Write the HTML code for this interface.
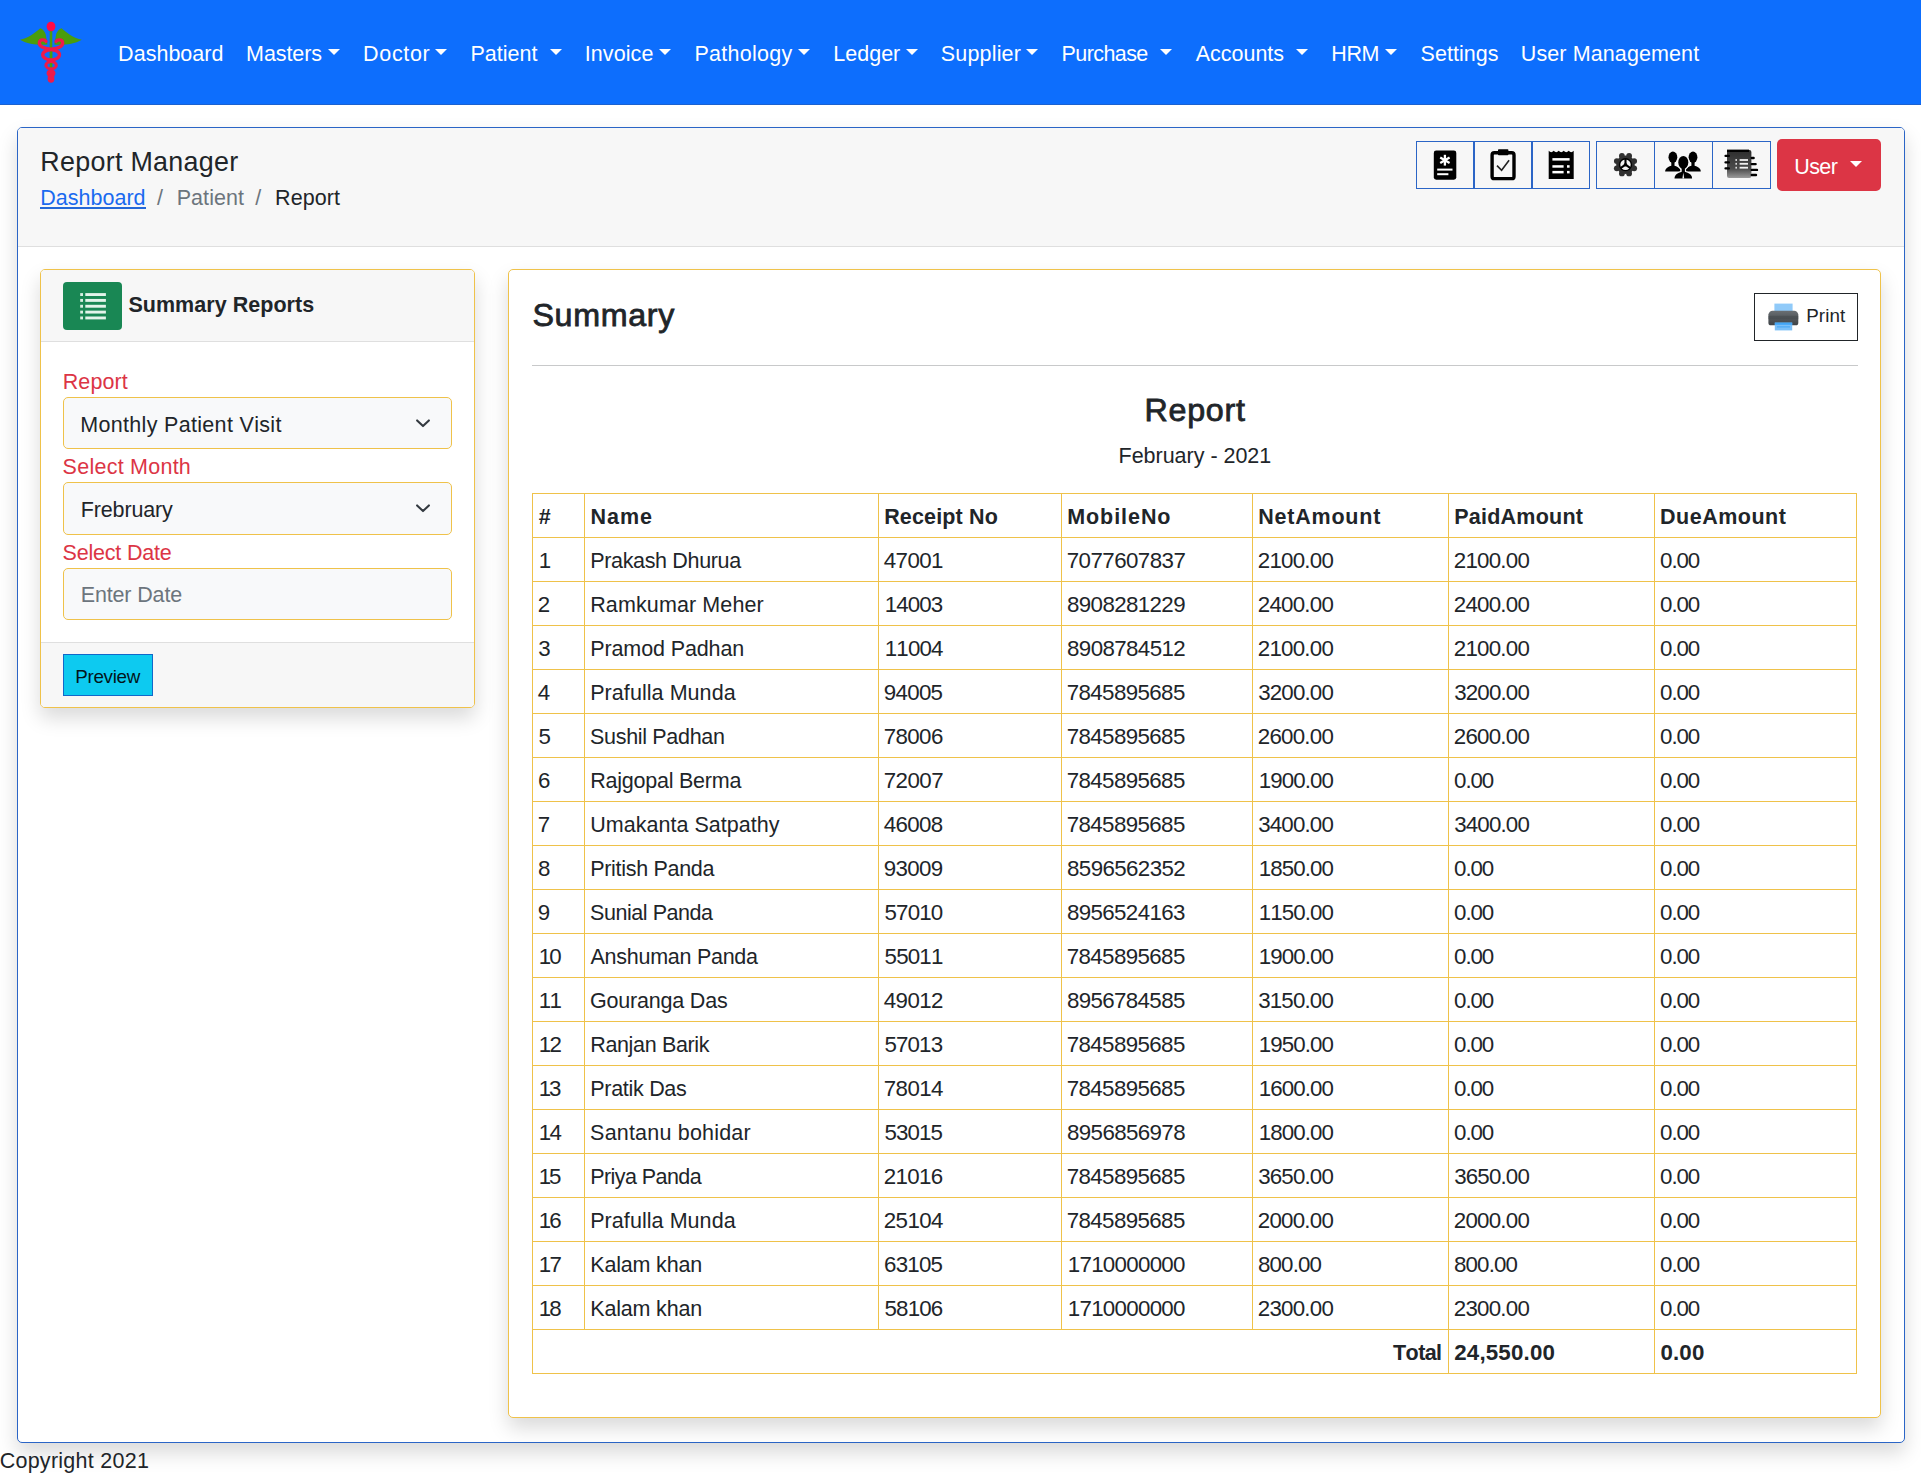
<!DOCTYPE html>
<html lang="en"><head><meta charset="utf-8"><title>Report Manager</title>
<style>
html,body{margin:0;padding:0}
body{width:1921px;height:1475px;position:relative;overflow:hidden;background:#fff;color:#212529;
font-family:"Liberation Sans",sans-serif;font-size:21.5px;font-kerning:none}
*{box-sizing:border-box}
.abs,.t{position:absolute}
.t{white-space:nowrap;line-height:1;display:block}
a{text-decoration:none;color:inherit}
nav{position:absolute;left:0;top:0;width:1921px;height:104px;background:#0d6efd;color:#fff}
.caret{position:absolute;width:0;height:0;border-left:6.2px solid transparent;border-right:6.2px solid transparent;border-top:6.5px solid #fff}
.card{position:absolute;background:#fff;border-radius:5px;box-shadow:0 10px 20px rgba(0,0,0,.15)}
.hdr{position:absolute;background:#f7f7f7}
.ib{position:absolute;top:141px;height:48px;border:1px solid #2b65c6;background:#f7f7f7}
.fc{position:absolute;left:63px;width:389px;height:52px;background:#f8f9fa;border:1px solid #efc24a;border-radius:5px}
table{position:absolute;left:532px;top:493px;border-collapse:separate;border-spacing:0;table-layout:fixed;width:1325px;
border-top:1px solid #efc24a;border-left:1px solid #efc24a}
td,th{height:44px;padding:1px 0 0 0;line-height:42px;border-right:1px solid #efc24a;border-bottom:1px solid #efc24a;
text-align:left;font-weight:400;white-space:nowrap;overflow:hidden;font-size:21.5px}
th,tfoot td{font-weight:700}
td span,th span{position:relative;top:1px;display:inline-block}
</style></head><body>

<nav>
<svg style="position:absolute;left:0px;top:0px" width="104" height="104" viewBox="0 0 104 104"><path fill="#4a9d0c" d="M20 39.8 C28 38 35 33 40.3 28.2 C42.5 28.6 44.5 31 45.6 34 L47.5 44.6 C40 45.4 28 44.6 20 39.8Z"/><path fill="#4a9d0c" d="M81.8 39.8 C73.8 38 66.8 33 61.5 28.2 C59.3 28.6 57.3 31 56.2 34 L54.3 44.6 C61.8 45.4 73.8 44.6 81.8 39.8Z"/><rect x="49.7" y="29" width="2.6" height="42" fill="#4a9d0c"/><ellipse cx="51" cy="26.5" rx="4.4" ry="4.8" fill="#ff0a47"/><g fill="none" stroke="#ee1a4b" stroke-width="3.3" stroke-linecap="round"><path d="M50.5 49.2 C44 48.4 38.6 46.6 39.4 42.2 C40 39.4 44.6 39.2 46 41.4"/><path d="M51.5 49.2 C58 48.4 63.4 46.6 62.6 42.2 C62 39.4 57.4 39.2 56 41.4"/><ellipse cx="51.1" cy="54.8" rx="8.4" ry="5"/><ellipse cx="51.1" cy="65.2" rx="5.2" ry="3.6" stroke-width="3.1"/></g><rect x="49.9" y="51.6" width="2.3" height="6.4" fill="#4a9d0c"/><rect x="50" y="63" width="2.1" height="4.2" fill="#4a9d0c"/><ellipse cx="51" cy="73.2" rx="4.4" ry="3.6" fill="#ee1a4b"/><ellipse cx="51" cy="78.4" rx="3.4" ry="4.4" fill="#ee1a4b"/></svg>
<a class="t" style="left:118.12px;top:44.00px;font-size:21.49px;letter-spacing:0.029px;">Dashboard</a>
<a class="t" style="left:246.09px;top:44.00px;font-size:21.49px;letter-spacing:-0.090px;">Masters</a>
<i class="caret" style="left:327.7px;top:49px"></i>
<a class="t" style="left:363.11px;top:44.00px;font-size:21.49px;letter-spacing:0.659px;">Doctor</a>
<i class="caret" style="left:435.0px;top:49px"></i>
<a class="t" style="left:470.39px;top:44.00px;font-size:21.49px;letter-spacing:0.045px;">Patient</a>
<i class="caret" style="left:549.5px;top:49px"></i>
<a class="t" style="left:584.69px;top:44.00px;font-size:21.49px;letter-spacing:0.095px;">Invoice</a>
<i class="caret" style="left:659.0px;top:49px"></i>
<a class="t" style="left:694.43px;top:44.00px;font-size:21.49px;letter-spacing:0.285px;">Pathology</a>
<i class="caret" style="left:797.9px;top:49px"></i>
<a class="t" style="left:833.29px;top:44.00px;font-size:21.49px;letter-spacing:0.014px;">Ledger</a>
<i class="caret" style="left:905.5px;top:49px"></i>
<a class="t" style="left:940.87px;top:44.00px;font-size:21.49px;letter-spacing:0.165px;">Supplier</a>
<i class="caret" style="left:1026.1px;top:49px"></i>
<a class="t" style="left:1061.55px;top:44.00px;font-size:21.49px;letter-spacing:-0.578px;">Purchase</a>
<i class="caret" style="left:1160.0px;top:49px"></i>
<a class="t" style="left:1195.69px;top:44.00px;font-size:21.49px;letter-spacing:0.004px;">Accounts</a>
<i class="caret" style="left:1295.9px;top:49px"></i>
<a class="t" style="left:1331.29px;top:44.00px;font-size:21.49px;letter-spacing:-0.419px;">HRM</a>
<i class="caret" style="left:1385.2px;top:49px"></i>
<a class="t" style="left:1420.55px;top:44.00px;font-size:21.49px;letter-spacing:0.034px;">Settings</a>
<a class="t" style="left:1520.77px;top:44.00px;font-size:21.49px;letter-spacing:0.117px;">User Management</a>
</nav>
<div class="abs" style="left:0;top:104px;width:1921px;height:1px;background:#1c62cf"></div>
<div class="card" style="left:17px;top:127px;width:1888px;height:1316px;border:1px solid #2b65c6">
<div class="hdr" style="left:0;top:0;width:1886px;height:119px;border-bottom:1px solid #dfdfdf;border-radius:4px 4px 0 0"></div>
</div>
<h5 class="t" style="left:40.27px;top:149.00px;font-size:26.87px;letter-spacing:0.297px;margin:0;font-weight:400;">Report Manager</h5>
<a class="t" style="left:40.22px;top:188.00px;font-size:21.49px;letter-spacing:0.029px;color:#1a6af0;">Dashboard</a>
<div class="abs" style="left:40px;top:207px;width:106px;height:2px;background:#2468d8"></div>
<span class="t" style="left:156.97px;top:188.00px;font-size:21.49px;letter-spacing:0.000px;color:#6c757d;">/</span>
<span class="t" style="left:176.75px;top:188.00px;font-size:21.49px;letter-spacing:0.045px;color:#6c757d;">Patient</span>
<span class="t" style="left:255.22px;top:188.00px;font-size:21.49px;letter-spacing:0.000px;color:#6c757d;">/</span>
<span class="t" style="left:275.00px;top:188.00px;font-size:21.49px;letter-spacing:0.116px;">Report</span>
<div class="ib" style="left:1416px;width:58px"><svg style="position:absolute;left:-1px;top:-1px" width="58" height="48" viewBox="0 0 58 48"><rect x="17.8" y="9.6" width="22.5" height="29.1" rx="2.4" fill="#000"/><line x1="28.90" y1="13.80" x2="28.90" y2="24.60" stroke="#fff" stroke-width="2.3"/><line x1="24.22" y1="16.50" x2="33.58" y2="21.90" stroke="#fff" stroke-width="2.3"/><line x1="24.22" y1="21.90" x2="33.58" y2="16.50" stroke="#fff" stroke-width="2.3"/><rect x="21.2" y="27.6" width="15.3" height="2" fill="#fff"/><rect x="21.2" y="32.2" width="11.2" height="2" fill="#fff"/></svg></div>
<div class="ib" style="left:1474px;width:58px"><svg style="position:absolute;left:-1px;top:-1px" width="58" height="48" viewBox="0 0 58 48"><rect x="18.1" y="11.8" width="21.9" height="25.8" rx="2.2" fill="none" stroke="#000" stroke-width="3.4"/><rect x="24" y="8.2" width="10.4" height="6" rx="0.8" fill="#000"/><path d="M23 24.6 L27.6 29.3 L35.1 19.3" fill="none" stroke="#222" stroke-width="1.6"/></svg></div>
<div class="ib" style="left:1532px;width:58px"><svg style="position:absolute;left:-1px;top:-1px" width="58" height="48" viewBox="0 0 58 48"><path d="M16.70 37.90 L16.70 9.70 Q19.20 12.60 21.70 9.70 Q24.20 12.60 26.70 9.70 Q29.20 12.60 31.70 9.70 Q34.20 12.60 36.70 9.70 Q39.20 12.60 41.70 9.70 L41.70 37.90 Z" fill="#000"/><rect x="20.4" y="17.1" width="17.2" height="2.5" fill="#fff"/><rect x="20.4" y="24.2" width="11.2" height="2.5" fill="#fff"/><rect x="35" y="24.2" width="2.6" height="2.5" fill="#fff"/><rect x="20.4" y="29.9" width="11.2" height="2.5" fill="#fff"/><rect x="35" y="29.9" width="2.6" height="2.5" fill="#fff"/></svg></div>
<div class="ib" style="left:1596px;width:59px"><svg style="position:absolute;left:-1px;top:-1px" width="59" height="48" viewBox="0 0 59 48"><circle cx="29.5" cy="23.7" r="9.3" fill="#303030"/><circle cx="38.18" cy="27.30" r="2.9" fill="#303030"/><circle cx="33.10" cy="32.38" r="2.9" fill="#303030"/><circle cx="25.90" cy="32.38" r="2.9" fill="#303030"/><circle cx="20.82" cy="27.30" r="2.9" fill="#303030"/><circle cx="20.82" cy="20.10" r="2.9" fill="#303030"/><circle cx="25.90" cy="15.02" r="2.9" fill="#303030"/><circle cx="33.10" cy="15.02" r="2.9" fill="#303030"/><circle cx="38.18" cy="20.10" r="2.9" fill="#303030"/><circle cx="29.5" cy="23.7" r="6.6" fill="#000"/><circle cx="29.5" cy="23.7" r="5.2" fill="#f4f4f4"/><circle cx="29.5" cy="23.7" r="1.7" fill="#000"/><line x1="29.5" y1="23.7" x2="29.50" y2="17.70" stroke="#000" stroke-width="2.1"/><line x1="29.5" y1="23.7" x2="24.59" y2="27.14" stroke="#000" stroke-width="2.1"/><line x1="29.5" y1="23.7" x2="34.41" y2="27.14" stroke="#000" stroke-width="2.1"/></svg></div>
<div class="ib" style="left:1654px;width:59px"><svg style="position:absolute;left:-1px;top:-1px" width="59" height="48" viewBox="0 0 59 48"><g fill="#000"><ellipse cx="18.9" cy="16.2" rx="4.4" ry="5.6"/><rect x="17.3" y="20.8" width="3.2" height="5.9"/><path d="M11.15 30.6 C11.15 26.55 15.8 25.2 18.9 24.6 L18.9 24.6 C22 25.2 26.65 26.55 26.65 30.6 Z"/><ellipse cx="39" cy="16.2" rx="4.4" ry="5.6"/><rect x="37.4" y="20.8" width="3.2" height="5.9"/><path d="M31.25 30.6 C31.25 26.55 35.9 25.2 39 24.6 L39 24.6 C42.1 25.2 46.75 26.55 46.75 30.6 Z"/></g><g fill="#f7f7f7" stroke="#f7f7f7" stroke-width="2.4"><ellipse cx="29.3" cy="21.4" rx="5" ry="6.4"/><rect x="27.7" y="26.8" width="3.2" height="5.9"/><path d="M20.5 37.6 C20.5 32.8 25.78 31.2 29.3 30.6 L29.3 30.6 C32.82 31.2 38.1 32.8 38.1 37.6 Z"/></g><g fill="#000"><ellipse cx="29.3" cy="21.4" rx="5" ry="6.4"/><rect x="27.7" y="26.8" width="3.2" height="5.9"/><path d="M20.5 37.6 C20.5 32.8 25.78 31.2 29.3 30.6 L29.3 30.6 C32.82 31.2 38.1 32.8 38.1 37.6 Z"/></g><path d="M29.3 31.5 L28.4 37.4 L30.2 37.4Z" fill="#f7f7f7"/></svg></div>
<div class="ib" style="left:1712px;width:59px"><svg style="position:absolute;left:-1px;top:-1px" width="59" height="48" viewBox="0 0 59 48"><defs><linearGradient id="nb" x1="0" y1="0" x2="0" y2="1"><stop offset="0" stop-color="#2c2c2c"/><stop offset="0.68" stop-color="#4c4c4c"/><stop offset="1" stop-color="#9a9a9a"/></linearGradient></defs><rect x="15" y="9" width="24.4" height="27.9" rx="2" fill="url(#nb)"/><rect x="15" y="8.6" width="22" height="2.4" fill="#000"/><rect x="12.4" y="13.8" width="5.6" height="2.3" rx="1.1" fill="#000"/><rect x="12.4" y="20.2" width="5.6" height="2.3" rx="1.1" fill="#000"/><rect x="12.4" y="26.2" width="5.6" height="2.3" rx="1.1" fill="#000"/><rect x="38.6" y="15.8" width="4.2" height="2.4" rx="1.2" fill="#000"/><rect x="38.6" y="21.9" width="6.2" height="2.4" rx="1.2" fill="#000"/><rect x="38.6" y="27.7" width="7.6" height="2.4" rx="1.2" fill="#000"/><rect x="38.6" y="32.8" width="6.6" height="2.4" rx="1.2" fill="#000"/><rect x="23.4" y="18.1" width="1.6" height="1.8" fill="#dcdcdc"/><rect x="27.6" y="18.1" width="8.4" height="1.8" fill="#f0f0f0"/><rect x="23.4" y="21.9" width="1.6" height="1.8" fill="#dcdcdc"/><rect x="27.6" y="21.9" width="8.4" height="1.8" fill="#f0f0f0"/><rect x="23.4" y="25.8" width="1.6" height="1.8" fill="#dcdcdc"/><rect x="27.6" y="25.8" width="8.4" height="1.8" fill="#f0f0f0"/></svg></div>
<div class="abs" style="left:1777px;top:139px;width:104px;height:52px;background:#dc3545;border-radius:5px"></div>
<span class="t" style="left:1794.21px;top:157.00px;font-size:21.49px;letter-spacing:-0.552px;color:#fff;">User</span>
<i class="caret" style="left:1850.2px;top:161px"></i>
<div class="card" style="left:40px;top:269px;width:435px;height:439px;border:1px solid #efc24a">
<div class="hdr" style="left:0;top:0;width:433px;height:72px;border-bottom:1px solid #dfdfdf;border-radius:4px 4px 0 0"></div>
<div class="hdr" style="left:0;top:372px;width:433px;height:65px;border-top:1px solid #dfdfdf;border-radius:0 0 4px 4px"></div>
</div>
<div class="abs" style="left:63px;top:282px;width:59px;height:48px;background:#198754;border-radius:4px"><svg style="position:absolute;left:0px;top:0px" width="59" height="48" viewBox="0 0 59 48"><rect x="17.2" y="11.10" width="2.8" height="2.9" fill="#d9f0e3"/><rect x="22.3" y="11.10" width="20.6" height="2.9" fill="#e3f4ea"/><rect x="17.2" y="16.95" width="2.8" height="2.9" fill="#d9f0e3"/><rect x="22.3" y="16.95" width="20.6" height="2.9" fill="#e3f4ea"/><rect x="17.2" y="22.80" width="2.8" height="2.9" fill="#d9f0e3"/><rect x="22.3" y="22.80" width="20.6" height="2.9" fill="#e3f4ea"/><rect x="17.2" y="28.65" width="2.8" height="2.9" fill="#d9f0e3"/><rect x="22.3" y="28.65" width="20.6" height="2.9" fill="#e3f4ea"/><rect x="17.2" y="34.50" width="2.8" height="2.9" fill="#d9f0e3"/><rect x="22.3" y="34.50" width="20.6" height="2.9" fill="#e3f4ea"/></svg></div>
<span class="t" style="left:128.38px;top:295.00px;font-size:21.49px;letter-spacing:0.054px;font-weight:700;">Summary Reports</span>
<label class="t" style="left:62.72px;top:372.00px;font-size:21.49px;letter-spacing:0.116px;color:#dc3545;">Report</label>
<div class="fc" style="top:397px"></div>
<span class="t" style="left:80.22px;top:415.00px;font-size:21.49px;letter-spacing:0.326px;">Monthly Patient Visit</span>
<label class="t" style="left:62.62px;top:457.00px;font-size:21.49px;letter-spacing:0.255px;color:#dc3545;">Select Month</label>
<div class="fc" style="top:482px;height:53px"></div>
<span class="t" style="left:80.72px;top:500.00px;font-size:21.49px;letter-spacing:-0.128px;">Frebruary</span>
<label class="t" style="left:62.62px;top:543.00px;font-size:21.49px;letter-spacing:-0.202px;color:#dc3545;">Select Date</label>
<div class="fc" style="top:568px"></div>
<span class="t" style="left:80.72px;top:585.00px;font-size:21.49px;letter-spacing:-0.138px;color:#6c757d;">Enter Date</span>
<svg class="abs" style="left:414px;top:418px" width="18" height="12" viewBox="0 0 18 12"><path d="M3.1 2.4 L9 8.1 L14.9 2.4" fill="none" stroke="#343a40" stroke-width="2.1" stroke-linecap="round" stroke-linejoin="round"/></svg>
<svg class="abs" style="left:414px;top:503px" width="18" height="12" viewBox="0 0 18 12"><path d="M3.1 2.4 L9 8.1 L14.9 2.4" fill="none" stroke="#343a40" stroke-width="2.1" stroke-linecap="round" stroke-linejoin="round"/></svg>
<div class="abs" style="left:63px;top:654px;width:90px;height:42px;background:#0dcaf0;border:1px solid #1268c9"></div>
<span class="t" style="left:75.29px;top:668.00px;font-size:18.81px;letter-spacing:-0.310px;color:#03151b;">Preview</span>
<div class="card" style="left:508px;top:269px;width:1373px;height:1149px;border:1px solid #efc24a"></div>
<h4 class="t" style="left:532.44px;top:299.00px;font-size:32.24px;letter-spacing:0.665px;margin:0;font-weight:400;-webkit-text-stroke:0.8px #212529;">Summary</h4>
<div class="abs" style="left:1754px;top:293px;width:104px;height:48px;border:1px solid #212529"><svg style="position:absolute;left:-1px;top:-1px" width="104" height="48" viewBox="0 0 104 48"><defs><linearGradient id="pg" x1="0" y1="0" x2="0" y2="1"><stop offset="0" stop-color="#6a6f73"/><stop offset="0.45" stop-color="#555a5e"/><stop offset="1" stop-color="#3f4347"/></linearGradient></defs><rect x="20.4" y="10.6" width="18.2" height="9" fill="#90caf9"/><path d="M18.6 17.7 H40.1 Q43.5 17.7 44.3 21.6 V29.7 Q44.3 32.3 41.7 32.3 H17 Q14.4 32.3 14.4 29.7 V21.6 Q15.2 17.7 18.6 17.7Z" fill="url(#pg)"/><rect x="14.4" y="22.8" width="29.9" height="3.4" fill="#44484c" opacity=".55"/><rect x="20.8" y="29.6" width="17.4" height="7.8" fill="#7cc0f8"/><rect x="20.8" y="29.6" width="17.4" height="2.2" fill="#42a5f5"/><rect x="23" y="33.4" width="13" height="1" fill="#42a5f5"/></svg></div>
<span class="t" style="left:1806.19px;top:307.00px;font-size:18.81px;letter-spacing:0.104px;">Print</span>
<div class="abs" style="left:532px;top:365px;width:1326px;height:1px;background:#c8c9ca"></div>
<h4 class="t" style="left:1144.46px;top:394.00px;font-size:32.24px;letter-spacing:0.742px;margin:0;font-weight:400;-webkit-text-stroke:0.8px #212529;">Report</h4>
<span class="t" style="left:1118.52px;top:446.00px;font-size:21.49px;letter-spacing:-0.008px;">February - 2021</span>
<table><colgroup><col style="width:52px"><col style="width:294px"><col style="width:183px"><col style="width:191px"><col style="width:196px"><col style="width:206px"><col style="width:202px"></colgroup>
<thead><tr><th><span style="letter-spacing:0.000px;margin-left:5.83px">#</span></th><th><span style="letter-spacing:0.947px;margin-left:5.56px">Name</span></th><th><span style="letter-spacing:0.159px;margin-left:5.16px">Receipt No</span></th><th><span style="letter-spacing:0.940px;margin-left:5.16px">MobileNo</span></th><th><span style="letter-spacing:0.776px;margin-left:5.26px">NetAmount</span></th><th><span style="letter-spacing:0.228px;margin-left:5.26px">PaidAmount</span></th><th><span style="letter-spacing:0.505px;margin-left:5.06px">DueAmount</span></th></tr></thead><tbody>
<tr><td><span style="font-size:22.3px;letter-spacing:0.000px;margin-left:5.72px">1</span></td><td><span style="letter-spacing:-0.341px;margin-left:5.22px">Prakash Dhurua</span></td><td><span style="font-size:22.3px;letter-spacing:-0.608px;margin-left:4.82px">47001</span></td><td><span style="font-size:22.3px;letter-spacing:-0.547px;margin-left:4.74px">7077607837</span></td><td><span style="font-size:22.3px;letter-spacing:-0.760px;margin-left:4.76px">2100.00</span></td><td><span style="font-size:22.3px;letter-spacing:-0.760px;margin-left:4.76px">2100.00</span></td><td><span style="font-size:22.3px;letter-spacing:-1.097px;margin-left:5.12px">0.00</span></td></tr>
<tr><td><span style="font-size:22.3px;letter-spacing:0.000px;margin-left:4.76px">2</span></td><td><span style="letter-spacing:0.113px;margin-left:5.22px">Ramkumar Meher</span></td><td><span style="font-size:22.3px;letter-spacing:-0.916px;margin-left:5.72px">14003</span></td><td><span style="font-size:22.3px;letter-spacing:-0.610px;margin-left:5.02px">8908281229</span></td><td><span style="font-size:22.3px;letter-spacing:-0.760px;margin-left:4.76px">2400.00</span></td><td><span style="font-size:22.3px;letter-spacing:-0.760px;margin-left:4.76px">2400.00</span></td><td><span style="font-size:22.3px;letter-spacing:-1.097px;margin-left:5.12px">0.00</span></td></tr>
<tr><td><span style="font-size:22.3px;letter-spacing:0.000px;margin-left:5.25px">3</span></td><td><span style="letter-spacing:-0.112px;margin-left:5.22px">Pramod Padhan</span></td><td><span style="font-size:22.3px;letter-spacing:-0.806px;margin-left:5.72px">11004</span></td><td><span style="font-size:22.3px;letter-spacing:-0.591px;margin-left:5.02px">8908784512</span></td><td><span style="font-size:22.3px;letter-spacing:-0.760px;margin-left:4.76px">2100.00</span></td><td><span style="font-size:22.3px;letter-spacing:-0.760px;margin-left:4.76px">2100.00</span></td><td><span style="font-size:22.3px;letter-spacing:-1.097px;margin-left:5.12px">0.00</span></td></tr>
<tr><td><span style="font-size:22.3px;letter-spacing:0.000px;margin-left:4.82px">4</span></td><td><span style="letter-spacing:0.060px;margin-left:5.22px">Prafulla Munda</span></td><td><span style="font-size:22.3px;letter-spacing:-0.706px;margin-left:4.83px">94005</span></td><td><span style="font-size:22.3px;letter-spacing:-0.604px;margin-left:4.74px">7845895685</span></td><td><span style="font-size:22.3px;letter-spacing:-0.842px;margin-left:5.25px">3200.00</span></td><td><span style="font-size:22.3px;letter-spacing:-0.842px;margin-left:5.25px">3200.00</span></td><td><span style="font-size:22.3px;letter-spacing:-1.097px;margin-left:5.12px">0.00</span></td></tr>
<tr><td><span style="font-size:22.3px;letter-spacing:0.000px;margin-left:5.54px">5</span></td><td><span style="letter-spacing:-0.326px;margin-left:5.12px">Sushil Padhan</span></td><td><span style="font-size:22.3px;letter-spacing:-0.615px;margin-left:4.74px">78006</span></td><td><span style="font-size:22.3px;letter-spacing:-0.604px;margin-left:4.74px">7845895685</span></td><td><span style="font-size:22.3px;letter-spacing:-0.760px;margin-left:4.76px">2600.00</span></td><td><span style="font-size:22.3px;letter-spacing:-0.760px;margin-left:4.76px">2600.00</span></td><td><span style="font-size:22.3px;letter-spacing:-1.097px;margin-left:5.12px">0.00</span></td></tr>
<tr><td><span style="font-size:22.3px;letter-spacing:0.000px;margin-left:4.97px">6</span></td><td><span style="letter-spacing:-0.228px;margin-left:5.22px">Rajgopal Berma</span></td><td><span style="font-size:22.3px;letter-spacing:-0.552px;margin-left:4.74px">72007</span></td><td><span style="font-size:22.3px;letter-spacing:-0.604px;margin-left:4.74px">7845895685</span></td><td><span style="font-size:22.3px;letter-spacing:-0.921px;margin-left:5.72px">1900.00</span></td><td><span style="font-size:22.3px;letter-spacing:-1.097px;margin-left:5.12px">0.00</span></td><td><span style="font-size:22.3px;letter-spacing:-1.097px;margin-left:5.12px">0.00</span></td></tr>
<tr><td><span style="font-size:22.3px;letter-spacing:0.000px;margin-left:4.74px">7</span></td><td><span style="letter-spacing:0.032px;margin-left:5.21px">Umakanta Satpathy</span></td><td><span style="font-size:22.3px;letter-spacing:-0.638px;margin-left:4.82px">46008</span></td><td><span style="font-size:22.3px;letter-spacing:-0.604px;margin-left:4.74px">7845895685</span></td><td><span style="font-size:22.3px;letter-spacing:-0.842px;margin-left:5.25px">3400.00</span></td><td><span style="font-size:22.3px;letter-spacing:-0.842px;margin-left:5.25px">3400.00</span></td><td><span style="font-size:22.3px;letter-spacing:-1.097px;margin-left:5.12px">0.00</span></td></tr>
<tr><td><span style="font-size:22.3px;letter-spacing:0.000px;margin-left:5.02px">8</span></td><td><span style="letter-spacing:-0.304px;margin-left:5.22px">Pritish Panda</span></td><td><span style="font-size:22.3px;letter-spacing:-0.648px;margin-left:4.83px">93009</span></td><td><span style="font-size:22.3px;letter-spacing:-0.591px;margin-left:5.02px">8596562352</span></td><td><span style="font-size:22.3px;letter-spacing:-0.921px;margin-left:5.72px">1850.00</span></td><td><span style="font-size:22.3px;letter-spacing:-1.097px;margin-left:5.12px">0.00</span></td><td><span style="font-size:22.3px;letter-spacing:-1.097px;margin-left:5.12px">0.00</span></td></tr>
<tr><td><span style="font-size:22.3px;letter-spacing:0.000px;margin-left:4.83px">9</span></td><td><span style="letter-spacing:-0.457px;margin-left:5.12px">Sunial Panda</span></td><td><span style="font-size:22.3px;letter-spacing:-0.843px;margin-left:5.54px">57010</span></td><td><span style="font-size:22.3px;letter-spacing:-0.631px;margin-left:5.02px">8956524163</span></td><td><span style="font-size:22.3px;letter-spacing:-0.921px;margin-left:5.72px">1150.00</span></td><td><span style="font-size:22.3px;letter-spacing:-1.097px;margin-left:5.12px">0.00</span></td><td><span style="font-size:22.3px;letter-spacing:-1.097px;margin-left:5.12px">0.00</span></td></tr>
<tr><td><span style="font-size:22.3px;letter-spacing:-1.926px;margin-left:5.72px">10</span></td><td><span style="letter-spacing:-0.264px;margin-left:5.51px">Anshuman Panda</span></td><td><span style="font-size:22.3px;letter-spacing:-0.788px;margin-left:5.54px">55011</span></td><td><span style="font-size:22.3px;letter-spacing:-0.604px;margin-left:4.74px">7845895685</span></td><td><span style="font-size:22.3px;letter-spacing:-0.921px;margin-left:5.72px">1900.00</span></td><td><span style="font-size:22.3px;letter-spacing:-1.097px;margin-left:5.12px">0.00</span></td><td><span style="font-size:22.3px;letter-spacing:-1.097px;margin-left:5.12px">0.00</span></td></tr>
<tr><td><span style="font-size:22.3px;letter-spacing:-1.708px;margin-left:5.72px">11</span></td><td><span style="letter-spacing:-0.194px;margin-left:5.02px">Gouranga Das</span></td><td><span style="font-size:22.3px;letter-spacing:-0.600px;margin-left:4.82px">49012</span></td><td><span style="font-size:22.3px;letter-spacing:-0.636px;margin-left:5.02px">8956784585</span></td><td><span style="font-size:22.3px;letter-spacing:-0.842px;margin-left:5.25px">3150.00</span></td><td><span style="font-size:22.3px;letter-spacing:-1.097px;margin-left:5.12px">0.00</span></td><td><span style="font-size:22.3px;letter-spacing:-1.097px;margin-left:5.12px">0.00</span></td></tr>
<tr><td><span style="font-size:22.3px;letter-spacing:-1.675px;margin-left:5.72px">12</span></td><td><span style="letter-spacing:-0.346px;margin-left:5.22px">Ranjan Barik</span></td><td><span style="font-size:22.3px;letter-spacing:-0.870px;margin-left:5.54px">57013</span></td><td><span style="font-size:22.3px;letter-spacing:-0.604px;margin-left:4.74px">7845895685</span></td><td><span style="font-size:22.3px;letter-spacing:-0.921px;margin-left:5.72px">1950.00</span></td><td><span style="font-size:22.3px;letter-spacing:-1.097px;margin-left:5.12px">0.00</span></td><td><span style="font-size:22.3px;letter-spacing:-1.097px;margin-left:5.12px">0.00</span></td></tr>
<tr><td><span style="font-size:22.3px;letter-spacing:-2.037px;margin-left:5.72px">13</span></td><td><span style="letter-spacing:-0.288px;margin-left:5.22px">Pratik Das</span></td><td><span style="font-size:22.3px;letter-spacing:-0.559px;margin-left:4.74px">78014</span></td><td><span style="font-size:22.3px;letter-spacing:-0.604px;margin-left:4.74px">7845895685</span></td><td><span style="font-size:22.3px;letter-spacing:-0.921px;margin-left:5.72px">1600.00</span></td><td><span style="font-size:22.3px;letter-spacing:-1.097px;margin-left:5.12px">0.00</span></td><td><span style="font-size:22.3px;letter-spacing:-1.097px;margin-left:5.12px">0.00</span></td></tr>
<tr><td><span style="font-size:22.3px;letter-spacing:-1.594px;margin-left:5.72px">14</span></td><td><span style="letter-spacing:0.193px;margin-left:5.12px">Santanu bohidar</span></td><td><span style="font-size:22.3px;letter-spacing:-0.881px;margin-left:5.54px">53015</span></td><td><span style="font-size:22.3px;letter-spacing:-0.608px;margin-left:5.02px">8956856978</span></td><td><span style="font-size:22.3px;letter-spacing:-0.921px;margin-left:5.72px">1800.00</span></td><td><span style="font-size:22.3px;letter-spacing:-1.097px;margin-left:5.12px">0.00</span></td><td><span style="font-size:22.3px;letter-spacing:-1.097px;margin-left:5.12px">0.00</span></td></tr>
<tr><td><span style="font-size:22.3px;letter-spacing:-2.081px;margin-left:5.72px">15</span></td><td><span style="letter-spacing:-0.564px;margin-left:5.22px">Priya Panda</span></td><td><span style="font-size:22.3px;letter-spacing:-0.621px;margin-left:4.76px">21016</span></td><td><span style="font-size:22.3px;letter-spacing:-0.604px;margin-left:4.74px">7845895685</span></td><td><span style="font-size:22.3px;letter-spacing:-0.842px;margin-left:5.25px">3650.00</span></td><td><span style="font-size:22.3px;letter-spacing:-0.842px;margin-left:5.25px">3650.00</span></td><td><span style="font-size:22.3px;letter-spacing:-1.097px;margin-left:5.12px">0.00</span></td></tr>
<tr><td><span style="font-size:22.3px;letter-spacing:-1.817px;margin-left:5.72px">16</span></td><td><span style="letter-spacing:0.060px;margin-left:5.22px">Prafulla Munda</span></td><td><span style="font-size:22.3px;letter-spacing:-0.565px;margin-left:4.76px">25104</span></td><td><span style="font-size:22.3px;letter-spacing:-0.604px;margin-left:4.74px">7845895685</span></td><td><span style="font-size:22.3px;letter-spacing:-0.760px;margin-left:4.76px">2000.00</span></td><td><span style="font-size:22.3px;letter-spacing:-0.760px;margin-left:4.76px">2000.00</span></td><td><span style="font-size:22.3px;letter-spacing:-1.097px;margin-left:5.12px">0.00</span></td></tr>
<tr><td><span style="font-size:22.3px;letter-spacing:-1.565px;margin-left:5.72px">17</span></td><td><span style="letter-spacing:-0.170px;margin-left:5.22px">Kalam khan</span></td><td><span style="font-size:22.3px;letter-spacing:-0.739px;margin-left:4.97px">63105</span></td><td><span style="font-size:22.3px;letter-spacing:-0.696px;margin-left:5.72px">1710000000</span></td><td><span style="font-size:22.3px;letter-spacing:-0.856px;margin-left:5.02px">800.00</span></td><td><span style="font-size:22.3px;letter-spacing:-0.856px;margin-left:5.02px">800.00</span></td><td><span style="font-size:22.3px;letter-spacing:-1.097px;margin-left:5.12px">0.00</span></td></tr>
<tr><td><span style="font-size:22.3px;letter-spacing:-1.828px;margin-left:5.72px">18</span></td><td><span style="letter-spacing:-0.170px;margin-left:5.22px">Kalam khan</span></td><td><span style="font-size:22.3px;letter-spacing:-0.815px;margin-left:5.54px">58106</span></td><td><span style="font-size:22.3px;letter-spacing:-0.696px;margin-left:5.72px">1710000000</span></td><td><span style="font-size:22.3px;letter-spacing:-0.760px;margin-left:4.76px">2300.00</span></td><td><span style="font-size:22.3px;letter-spacing:-0.760px;margin-left:4.76px">2300.00</span></td><td><span style="font-size:22.3px;letter-spacing:-1.097px;margin-left:5.12px">0.00</span></td></tr>
</tbody><tfoot><tr><td colspan="5"><span style="letter-spacing:-0.592px;margin-left:860.06px">Total</span></td><td><span style="font-size:22.3px;letter-spacing:0.185px;margin-left:5.23px">24,550.00</span></td><td><span style="font-size:22.3px;letter-spacing:0.131px;margin-left:5.52px">0.00</span></td></tr></tfoot></table>
<footer class="t" style="left:-0.39px;top:1451.00px;font-size:21.49px;letter-spacing:0.275px;">Copyright 2021</footer>
</body></html>
